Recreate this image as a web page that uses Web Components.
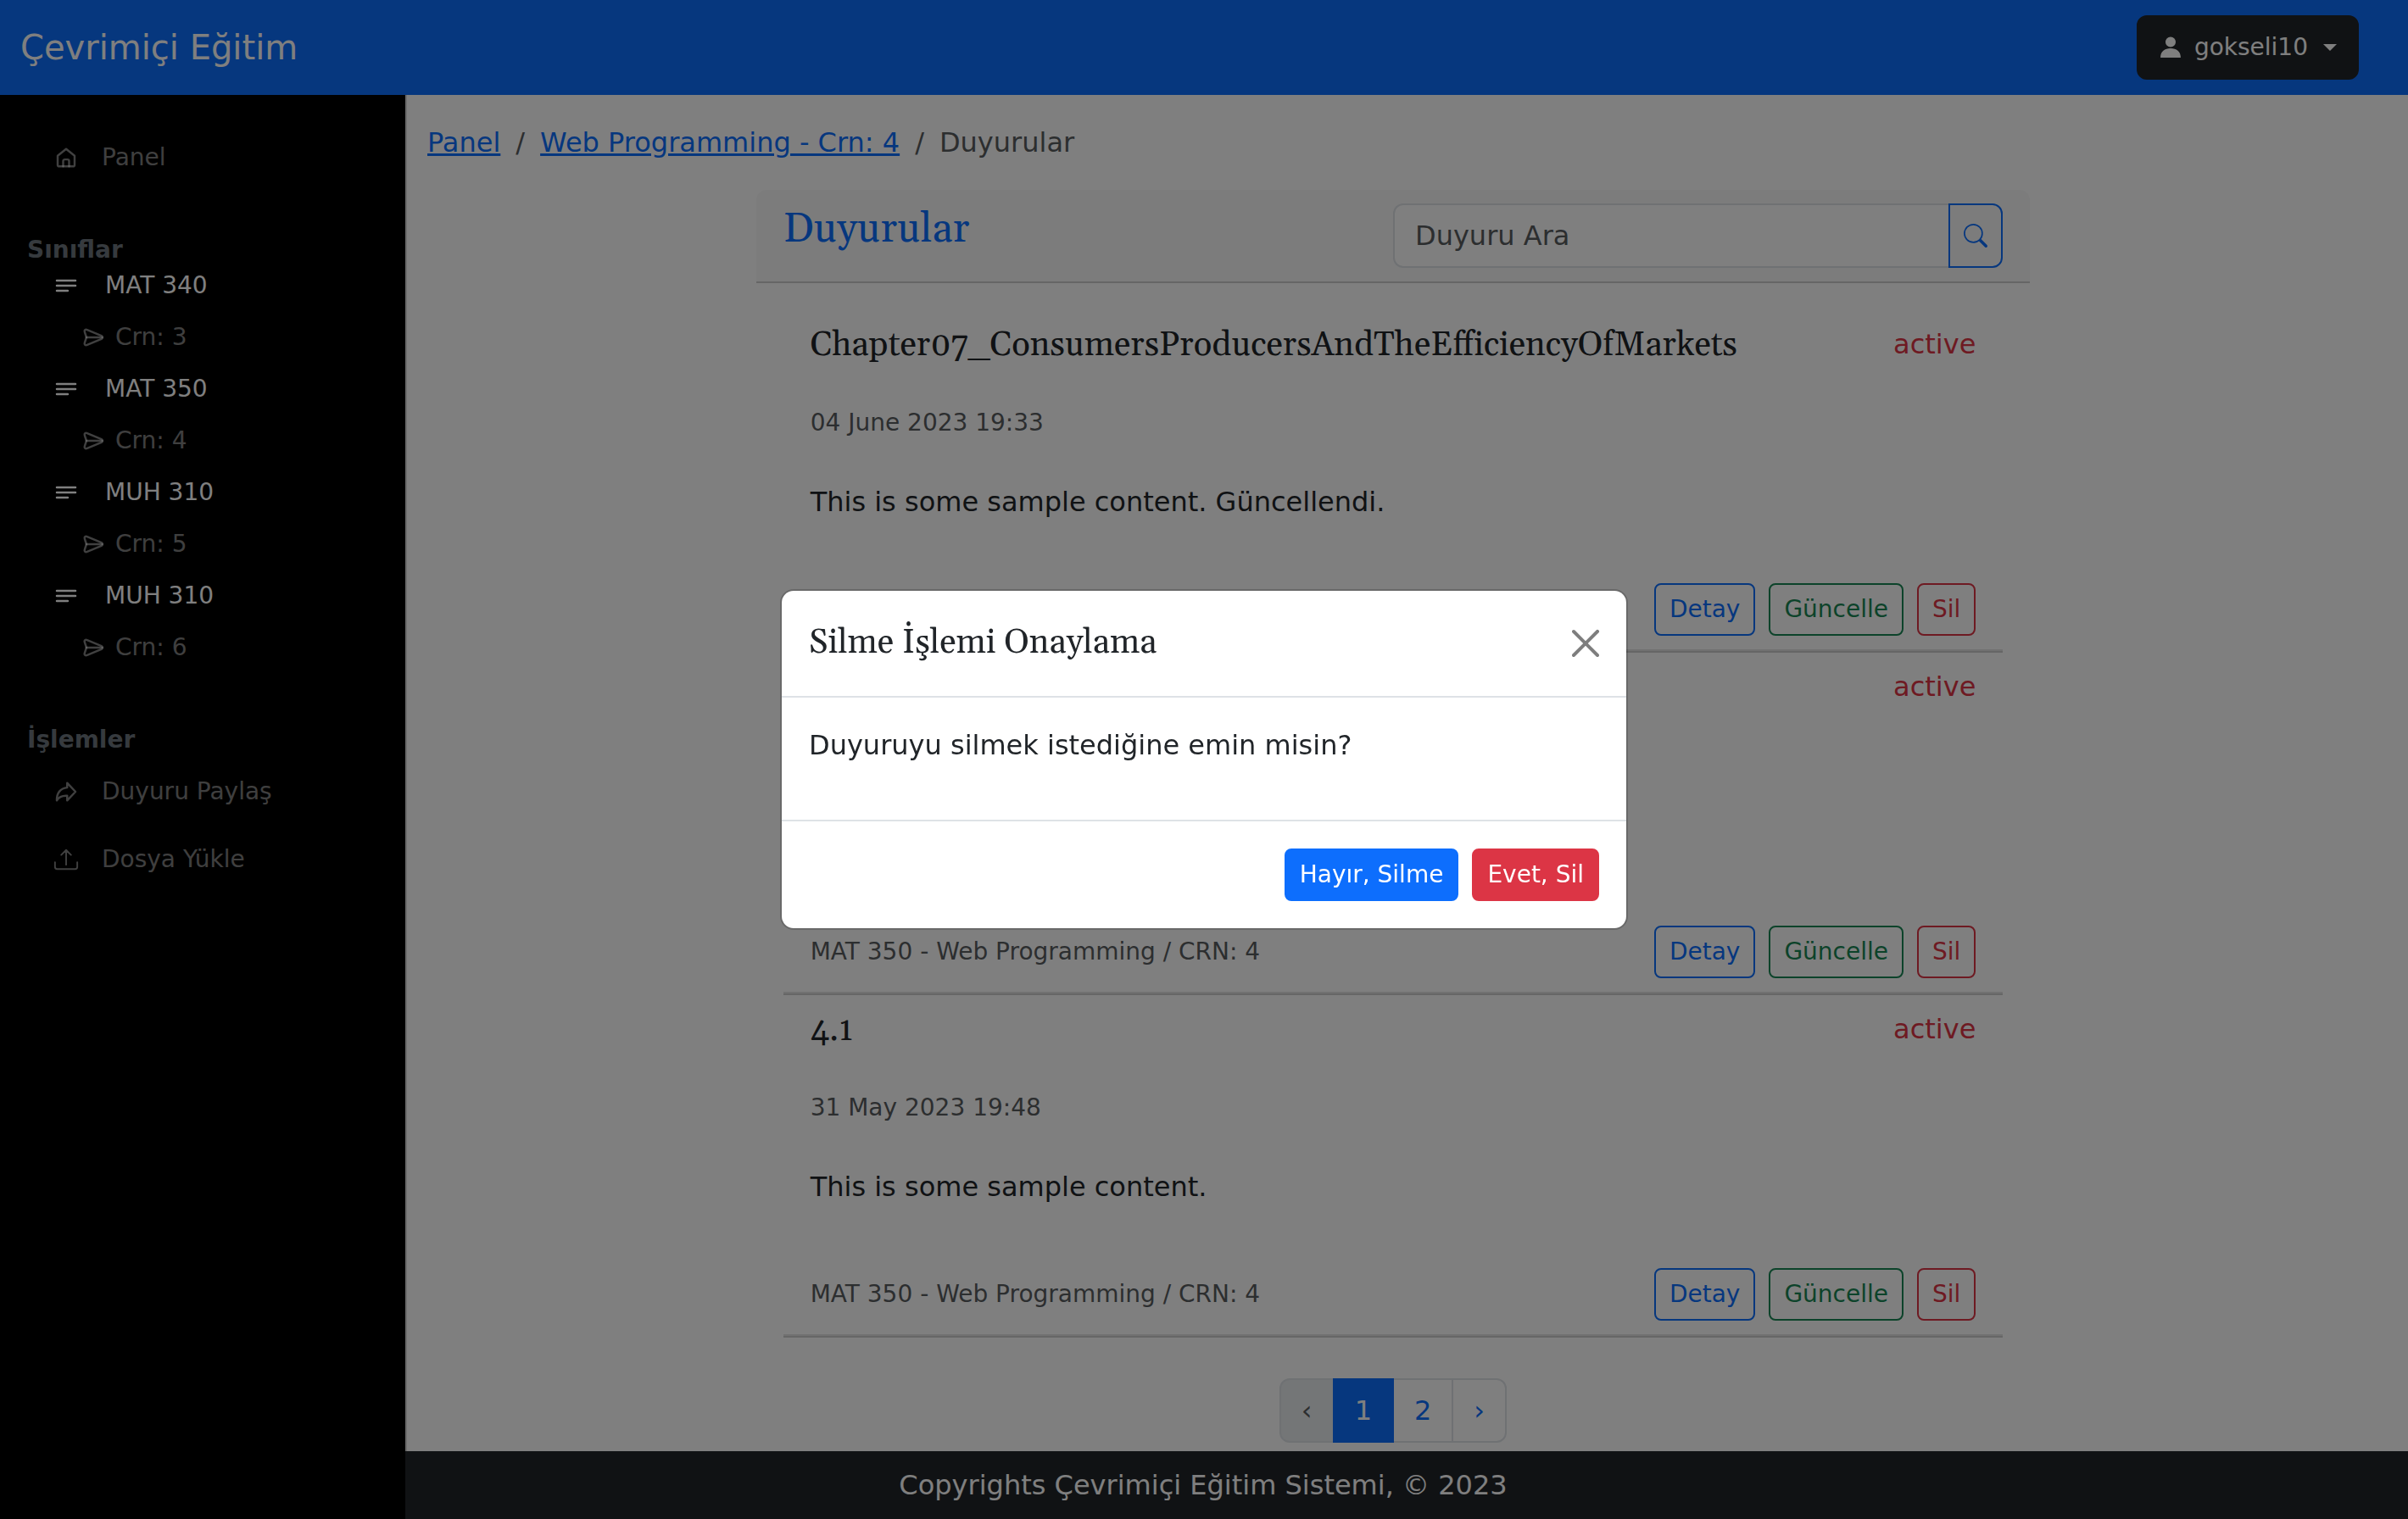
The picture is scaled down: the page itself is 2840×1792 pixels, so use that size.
<!DOCTYPE html>
<html lang="tr">
<head>
<meta charset="utf-8">
<meta name="viewport" content="width=device-width, initial-scale=1">
<title>Çevrimiçi Eğitim - Duyurular</title>
<style>
  :root {
    --blue: #0d6efd;
    --green: #198754;
    --red: #dc3545;
    --dark: #212529;
    --line: #dee2e6;
    --serif: Gelasio, "Liberation Serif", serif;
    --h1: 48px;
    --h2: 40px;
  }
  body {
    margin: 0;
    font: 32px/48px Verdana, "DejaVu Sans", sans-serif;
    color: var(--dark);
    background: #fff;
  }
</style>
</head>
<body>
<app-shell>
  <app-header slot="header" user="gokseli10">Çevrimiçi Eğitim</app-header>

  <side-nav slot="side">
    <nav-item icon="home">Panel</nav-item>
    <nav-heading>Sınıflar</nav-heading>
    <nav-course crn="Crn: 3">MAT 340</nav-course>
    <nav-course crn="Crn: 4">MAT 350</nav-course>
    <nav-course crn="Crn: 5">MUH 310</nav-course>
    <nav-course crn="Crn: 6">MUH 310</nav-course>
    <nav-heading>İşlemler</nav-heading>
    <nav-item icon="share">Duyuru Paylaş</nav-item>
    <nav-item icon="upload">Dosya Yükle</nav-item>
  </side-nav>

  <crumb-trail></crumb-trail>
  <list-card>
    <span slot="title">Duyurular</span>
    <search-box slot="tools" hint="Duyuru Ara"></search-box>
    <announcement-item state="active">
      <span slot="title">Chapter07_ConsumersProducersAndTheEfficiencyOfMarkets</span>
      <span slot="date">04 June 2023 19:33</span>
      This is some sample content. Güncellendi.
    </announcement-item>
    <announcement-item state="active">
      <span slot="course">MAT 350 - Web Programming / CRN: 4</span>
    </announcement-item>
    <announcement-item state="active">
      <span slot="title">4.1</span>
      <span slot="date">31 May 2023 19:48</span>
      This is some sample content.
      <span slot="course">MAT 350 - Web Programming / CRN: 4</span>
    </announcement-item>
    <page-links slot="pages"></page-links>
  </list-card>

  <app-footer slot="footer">Copyrights Çevrimiçi Eğitim Sistemi, © 2023</app-footer>
</app-shell>

<confirm-dialog>
  <span slot="title">Silme İşlemi Onaylama</span>
  Duyuruyu silmek istediğine emin misin?
  <ui-button slot="actions" kind="primary">Hayır, Silme</ui-button>
  <ui-button slot="actions" kind="danger">Evet, Sil</ui-button>
</confirm-dialog>

<script>
  const ICONS = {
    home: '<path d="M2.300 6.700 8 2.100l5.700 4.600v6.100a1.100 1.100 0 0 1-1.100 1.100H3.400a1.100 1.100 0 0 1-1.100-1.100z"/><path d="M6 13.900v-3.600a1.100 1.100 0 0 1 1.100-1.100h1.800a1.100 1.100 0 0 1 1.100 1.100v3.600"/>',
    lines: '<path d="M1.700 4.600h12.600M1.700 8h12.600M1.700 11.400h7.400"/>',
    send: '<path d="M2.200 4.300c-.4-1.200.5-1.900 1.700-1.400l9.600 4c1 .5 1 1.700 0 2.200l-9.600 4c-1.200.5-2.100-.2-1.700-1.400L3.400 8z"/><path d="M3.400 8h10.700"/>',
    share: '<path d="M8.700 2.100 14.300 8l-5.600 5.900v-3.200C5.600 10.500 3.300 11.200 1.700 13.900 1.600 8.900 4.200 5.500 8.700 5.200z"/>',
    upload: '<path stroke-width="1.100" d="M.5 9.900v3.100c0 .8.600 1.400 1.400 1.400h12.200c.8 0 1.400-.6 1.400-1.400V9.900M8 11.500V1.600M4.700 4.900 8 1.600l3.300 3.300"/>',
    search: '<path fill="currentColor" stroke="none" d="M11.742 10.344a6.500 6.500 0 1 0-1.397 1.398h-.001c.03.04.062.078.098.115l3.850 3.850a1 1 0 0 0 1.415-1.414l-3.850-3.850a1.007 1.007 0 0 0-.115-.1zM12 6.500a5.500 5.500 0 1 1-11 0 5.500 5.500 0 0 1 11 0z"/>',
    person: '<path fill="currentColor" stroke="none" d="M1.200 14.600c0-3.800 2.900-6 6.800-6s6.800 2.200 6.800 6v.3H1.200zM8 7.700a3.450 3.450 0 1 0 0-6.900 3.450 3.450 0 0 0 0 6.900z"/>',
    close: '<path fill="currentColor" stroke="none" d="M.293.293a1 1 0 0 1 1.414 0L8 6.586 14.293.293a1 1 0 1 1 1.414 1.414L9.414 8l6.293 6.293a1 1 0 0 1-1.414 1.414L8 9.414l-6.293 6.293a1 1 0 0 1-1.414-1.414L6.586 8 .293 1.707a1 1 0 0 1 0-1.414z"/>'
  };

  // Registers an element whose shadow root is cloned from a template.
  function define(name, css, html) {
    customElements.define(name, class extends HTMLElement {
      constructor() {
        super();
        this.attachShadow({ mode: 'open' });
      }
      connectedCallback() {
        const t = document.createElement('template');
        t.innerHTML = '<style>*{box-sizing:border-box}' + css + '</style>' +
          (typeof html === 'function' ? html(this) : html);
        this.shadowRoot.replaceChildren(t.content.cloneNode(true));
      }
    });
  }

  define('ui-icon', ':host{display:block;flex:none}svg{display:block;width:100%;height:100%;overflow:visible}',
    el => `<svg viewBox="0 0 16 16" fill="none" stroke="currentColor" stroke-width="1.400" stroke-linejoin="round" stroke-linecap="round" aria-hidden="true">${ICONS[el.getAttribute('name')]}</svg>`);

  define('ui-button', `
    :host{display:block;--c:var(--blue)}
    :host([kind=danger]),:host([kind=outline-danger]){--c:var(--red)}
    :host([kind=outline-success]){--c:var(--green)}
    button{display:block;font:inherit;font-size:28px;line-height:42px;padding:8px 16px;border:2px solid var(--c);border-radius:8px;background:var(--c);color:#fff}
    :host([kind^=outline]) button{background:transparent;color:var(--c)}`,
    '<button type="button"><slot></slot></button>');

  define('app-shell', `
    :host{display:flex;flex-direction:column;min-height:100vh}
    .row{display:flex;flex:1}
    .col{display:flex;flex:1;flex-direction:column;min-width:0}
    main{flex:1;padding:32px 34px 10px 0;border-left:2px solid #d6d6d6}`,
    `<slot name="header"></slot>
     <div class="row"><slot name="side"></slot>
       <div class="col"><main><slot></slot></main><slot name="footer"></slot></div>
     </div>`);

  define('app-header', `
    :host{display:block}
    header{display:flex;align-items:center;justify-content:space-between;background:var(--blue);padding:18px 58px 18px 24px}
    a{font-size:40px;line-height:60px;color:#fff;text-decoration:none}
    button{display:flex;align-items:center;font:inherit;font-size:28px;line-height:48px;color:#fff;background:var(--dark);border:2px solid var(--dark);border-radius:12px;padding:12px 24px}
    ui-icon{width:28px;height:28px;margin-right:14px}
    .caret{border:8px solid transparent;border-top-color:#fff;border-bottom:0;margin-left:18px}`,
    el => `<header><a href="#"><slot></slot></a>
      <button type="button" aria-haspopup="menu"><ui-icon name="person"></ui-icon>${el.getAttribute('user')}<span class="caret"></span></button></header>`);

  define('side-nav', `
    :host{display:block;width:478px;flex:none;background:#000;color:#fff;font-size:28px;line-height:42px}
    nav{padding:34px 32px}`,
    '<nav><slot></slot></nav>');

  define('nav-heading', `:host{display:block}h6{margin:48px 0 0;font:inherit;font-weight:bold;color:#6c757d}`,
    '<h6><slot></slot></h6>');

  define('nav-item', `
    :host{display:block;color:rgba(255,255,255,.5)}
    a{display:flex;align-items:center;gap:28px;padding:19px 32px;color:inherit;text-decoration:none}
    ui-icon{width:28px;height:28px}`,
    el => `<a href="#"><ui-icon name="${el.getAttribute('icon')}"></ui-icon><slot></slot></a>`);

  define('nav-course', `
    :host{display:block}
    a{display:flex;align-items:center;color:#fff;text-decoration:none;gap:32px;padding-left:32px}
    .crn{gap:12px;padding:19px 0 19px 64px;color:rgba(255,255,255,.5)}
    ui-icon{width:28px;height:28px}`,
    el => `<a href="#"><ui-icon name="lines"></ui-icon><slot></slot></a>
      <a class="crn" href="#"><ui-icon name="send"></ui-icon>${el.getAttribute('crn')}</a>`);

  define('crumb-trail', `
    :host{display:block;padding:0 24px 32px}
    ol{display:flex;gap:18px;margin:0;padding:0;list-style:none;color:#595c5f}
    li{display:flex;gap:18px}
    li+li::before{content:"/"}
    a{color:var(--blue)}`,
    `<nav aria-label="breadcrumb"><ol><li><a href="#">Panel</a></li>
      <li><a href="#">Web Programming - Crn: 4</a></li>
      <li aria-current="page">Duyurular</li></ol></nav>`);

  define('list-card', `
    :host{display:block;width:66.667%;margin:0 auto;padding:0 24px;box-sizing:border-box}
    header{display:flex;align-items:flex-start;justify-content:space-between;padding:16px 32px;background:#f8f8f9;border-bottom:2px solid #ccc;border-radius:12px 12px 0 0}
    h3{margin:0;font:var(--h1)/62px var(--serif);color:var(--blue)}
    .body{padding:32px 32px 0}
    .pages{display:flex;justify-content:center;padding-top:48px}`,
    `<section><header><h3><slot name="title"></slot></h3><slot name="tools"></slot></header>
      <div class="body"><slot></slot></div><div class="pages"><slot name="pages"></slot></div></section>`);

  define('search-box', `
    :host{display:block;width:50%}
    form{display:flex}
    input{flex:1;min-width:0;font:inherit;line-height:48px;padding:12px 24px;border:2px solid var(--line);border-right:0;border-radius:12px 0 0 12px;background:#fff;color:var(--dark)}
    input::placeholder{color:#595c5f;opacity:1}
    button{width:64px;padding:0 16px;border:2px solid var(--blue);border-radius:0 12px 12px 0;background:transparent;color:var(--blue)}
    ui-icon{width:28px;height:28px}`,
    el => `<form role="search"><input type="text" aria-label="${el.getAttribute('hint')}" placeholder="${el.getAttribute('hint')}">
      <button type="button" aria-label="Ara"><ui-icon name="search"></ui-icon></button></form>`);

  define('announcement-item', `
    :host{display:block}
    article{border-bottom:2px solid #ccc}
    .rule{height:2px;background:#e2e2e2}
    .content{padding:16px 32px 24px;color:var(--dark)}
    .top{display:flex;justify-content:space-between;align-items:flex-start;height:48px}
    h5{margin:0;font:var(--h2)/52px var(--serif)}
    .state{color:var(--red)}
    .date{font-size:28px;line-height:42px;min-height:42px;margin:48px 0;color:#595c5f}
    p{margin:0 0 32px;min-height:48px}
    footer{display:flex;align-items:center;gap:16px;padding:16px 32px;font-size:28px;line-height:42px}
    .course{flex:1;color:#595c5f}`,
    el => `<article><div class="content">
        <div class="top"><h5><slot name="title"></slot></h5><span class="state">${el.getAttribute('state')}</span></div>
        <div class="date"><slot name="date"></slot></div>
        <p><slot></slot></p></div>
      <footer><span class="course"><slot name="course"></slot></span>
        <ui-button kind="outline-primary">Detay</ui-button>
        <ui-button kind="outline-success">Güncelle</ui-button>
        <ui-button kind="outline-danger">Sil</ui-button></footer>
      <div class="rule"></div></article>`);

  define('page-links', `
    :host{display:block}
    ul{display:flex;margin:0;padding:0;list-style:none}
    li+li{margin-left:-2px}
    a{display:block;padding:12px 24px;border:2px solid var(--line);color:var(--blue);text-decoration:none}
    li:first-child a{background:#e9ecef;color:#595c5f;border-radius:12px 0 0 12px}
    li:last-child a{border-radius:0 12px 12px 0}
    a[aria-current]{position:relative;background:var(--blue);border-color:var(--blue);color:#fff}`,
    `<nav aria-label="Sayfalar"><ul><li><a aria-disabled="true">‹</a></li>
      <li><a href="#" aria-current="page">1</a></li><li><a href="#">2</a></li><li><a href="#">›</a></li></ul></nav>`);

  define('app-footer', `
    :host{display:block}
    footer{padding:16px 480px 16px 0;background:var(--dark);color:#fff;text-align:center}`,
    '<footer><slot></slot></footer>');

  define('confirm-dialog', `
    :host{position:fixed;inset:0;display:flex;align-items:center;justify-content:center;background:rgba(0,0,0,.5)}
    section{width:1000px;max-width:90%;background:#fff;background-clip:padding-box;border:2px solid rgba(0,0,0,.175);border-radius:16px}
    header{display:flex;align-items:center;justify-content:space-between;padding:32px;border-bottom:2px solid var(--line)}
    h5{margin:0;font:var(--h2)/60px var(--serif)}
    .close{padding:0;border:0;background:none;color:#000;opacity:.5}
    .close ui-icon{width:32px;height:32px}
    p{margin:0;padding:32px 32px 64px}
    footer{display:flex;justify-content:flex-end;gap:16px;padding:32px;border-top:2px solid var(--line)}`,
    `<section role="dialog" aria-modal="true"><header><h5><slot name="title"></slot></h5>
      <button class="close" type="button" aria-label="Kapat"><ui-icon name="close"></ui-icon></button></header>
      <p><slot></slot></p><footer><slot name="actions"></slot></footer></section>`);
</script>
</body>
</html>
